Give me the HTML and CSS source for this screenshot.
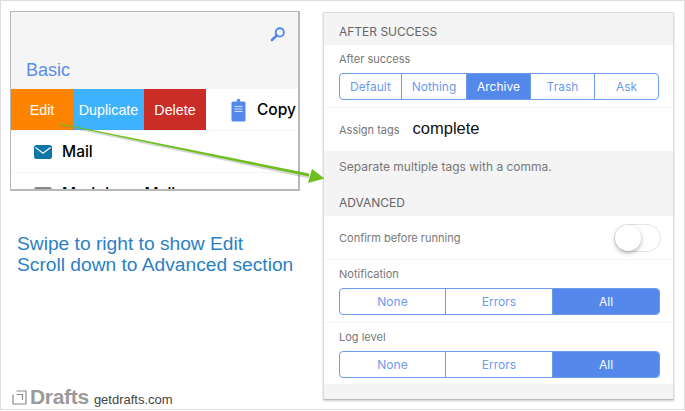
FILE: index.html
```html
<!DOCTYPE html>
<html lang="en">
<head>
  <meta charset="UTF-8">
  <title>Drafts - Edit action settings</title>
  <link rel="stylesheet" href="styles.css">
</head>
<body>
  <div class="frame">
    <div class="left">
      <div class="phone">
        <div class="phone-top">
          <div class="search-row">
            <svg class="search" width="16" height="16" viewBox="0 0 16 16"><circle cx="9.800" cy="6.400" r="4.100" fill="none" stroke="#4f86ec" stroke-width="1.900"/><path d="M6.800 9.400L2 14" stroke="#4f86ec" stroke-width="2.600" stroke-linecap="round"/></svg>
          </div>
          <div class="group-name">Basic</div>
        </div>
        <div class="swipe-row">
          <div class="swipe edit">Edit</div>
          <div class="swipe duplicate">Duplicate</div>
          <div class="swipe delete">Delete</div>
          <svg class="copy-icon" width="15" height="24" viewBox="0 0 15 24"><path d="M2 3.500h11a1.500 1.500 0 0 1 1.500 1.500v17a1.500 1.500 0 0 1-1.500 1.500H2A1.500 1.500 0 0 1 .5 22V5A1.500 1.500 0 0 1 2 3.500z" fill="#5488ea"/><circle cx="7.500" cy="2.500" r="1.800" fill="#5488ea"/><path d="M3.500 8.500h8M3.500 11h8M3.500 13.500h8" stroke="#cfe0fb" stroke-width="1"/></svg>
          <span class="action-name">Copy</span>
        </div>
        <div class="action-row">
          <svg class="mail-icon" width="18" height="14" viewBox="0 0 18 14"><rect width="18" height="14" rx="2.500" fill="#0f76a8"/><path d="M1.500 2.500L9 8.200l7.500-5.700" fill="none" stroke="#fff" stroke-width="1.100"/></svg>
          <span class="action-name">Mail</span>
        </div>
        <div class="action-row">
          <svg class="mail-icon" width="18" height="14" viewBox="0 0 18 14"><rect width="18" height="14" rx="2.500" fill="#888"/></svg>
          <span class="action-name">Markdown Mail</span>
        </div>
      </div>
      <div class="caption">Swipe to right to show Edit<br>Scroll down to Advanced section</div>
      <div class="brand">
        <svg width="15" height="15" viewBox="0 0 15 15"><path d="M1 4.500V14h13V1H4.500M4.500 4.500h6V10" fill="none" stroke="#8a8a8a" stroke-width="1.200"/></svg>
        <span class="brand-name">Drafts</span>
        <span class="brand-url">getdrafts.com</span>
      </div>
    </div>

    <div class="panel">
      <div class="section-head">AFTER SUCCESS</div>
      <div class="section">
        <div class="field">
          <div class="label">After success</div>
          <div class="segments five">
            <span class="seg s-default">Default</span>
            <span class="seg s-nothing">Nothing</span>
            <span class="seg s-archive on">Archive</span>
            <span class="seg s-trash">Trash</span>
            <span class="seg s-ask">Ask</span>
          </div>
        </div>
        <div class="tags-row">
          <span class="label">Assign tags</span>
          <span class="tags-value">complete</span>
        </div>
      </div>
      <div class="section-note">Separate multiple tags with a comma.</div>
      <div class="section-head">ADVANCED</div>
      <div class="section">
        <div class="toggle-row">
          <span class="label">Confirm before running</span>
          <span class="toggle"><span class="knob"></span></span>
        </div>
        <div class="field bordered">
          <div class="label">Notification</div>
          <div class="segments three">
            <span class="seg s-none">None</span>
            <span class="seg s-errors">Errors</span>
            <span class="seg on">All</span>
          </div>
        </div>
        <div class="field last">
          <div class="label">Log level</div>
          <div class="segments three">
            <span class="seg s-none">None</span>
            <span class="seg s-errors">Errors</span>
            <span class="seg on">All</span>
          </div>
        </div>
      </div>
    </div>

    <!-- annotation arrow from the Edit button over to the panel -->
    <svg class="arrow" width="340" height="80" viewBox="0 0 340 80">
      <path d="M60 5L309 55.500v3L60 6z" fill="#777" opacity=".3"/>
      <path d="M60 3.500L309 53.500v3L60 4.500z" fill="#6fbe1f"/>
      <path d="M312 49L324.500 58.500 308 63z" fill="#6fbe1f"/>
    </svg>
  </div>
</body>
</html>
```

FILE: styles.css
```css
* {
  box-sizing: border-box;
}
body {
  margin: 0;
  background-color: #fff;
  font-family: Inter, "Liberation Sans", sans-serif;
}
.frame {
  position: relative;
  display: flex;
  width: 685px;
  height: 410px;
  border: 1px solid #ddd;
}
.left {
  display: flex;
  flex-direction: column;
  width: 322px;
  padding: 10px 0 0 9px;
}

.phone {
  flex-shrink: 0;
  width: 290px;
  height: 180px;
  overflow: hidden;
  border: 1px solid #b8b8b8;
  border-width: 1px 2px 2px 1px;
}
.phone-top {
  height: 77px;
  background-color: #f5f5f5;
}
.search-row {
  display: flex;
  justify-content: flex-end;
  padding: 14px 12px 0 0;
}
.group-name {
  margin: 18px 0 0 15px;
  color: #5b8ee8;
  font-size: 18px;
  line-height: 21px;
  font-family: "Liberation Sans", sans-serif;
}
.swipe-row {
  display: flex;
  align-items: center;
  height: 42px;
  border-bottom: 1px solid #f4f4f4;
}
.swipe {
  display: flex;
  align-items: center;
  justify-content: center;
  height: 41px;
  color: #fff;
  font-size: 14.300px;
  font-family: "Liberation Sans", sans-serif;
}
.edit {
  width: 62px;
  background-color: #fd8400;
}
.duplicate {
  width: 71px;
  background-color: #3fb2fe;
}
.delete {
  width: 62px;
  background-color: #c92d25;
}
.copy-icon {
  margin: 0 11px 0 25px;
}
.action-row {
  display: flex;
  align-items: center;
  height: 42px;
  padding-left: 23px;
  border-bottom: 1px solid #f6f6f6;
}
.mail-icon {
  margin-right: 10px;
}
.action-name {
  color: #000;
  font-size: 15.500px;
  font-weight: 500;
  white-space: nowrap;
}

.caption {
  flex-shrink: 0;
  margin: 42px 0 0 7px;
  color: #2b80c4;
  font-size: 19.200px;
  line-height: 21px;
  white-space: nowrap;
  font-family: "Liberation Sans", sans-serif;
}
.brand {
  display: flex;
  flex-shrink: 0;
  align-items: center;
  margin: 110px 0 0 2px;
}
.brand-name {
  margin-left: 3px;
  color: #9a9a9a;
  font-size: 21px;
  font-weight: 700;
  letter-spacing: -.3px;
  font-family: "Liberation Sans", sans-serif;
}
.brand-url {
  margin: 4px 0 0 5px;
  color: #444;
  font-size: 13px;
  font-family: "Liberation Sans", sans-serif;
}

.panel {
  width: 351px;
  height: 388px;
  margin-top: 11px;
  background-color: #f4f4f4;
  border: 1px solid #dcdcdc;
  border-bottom-color: #bbb;
  box-shadow: 0 1px 2px rgba(0, 0, 0, .2);
}
.section-head {
  height: 32px;
  padding: 11px 0 0 15px;
  color: #666;
  font-size: 12px;
  line-height: 16px;
}
.section {
  background-color: #fff;
}
.section-note {
  height: 36px;
  padding: 8px 0 0 15px;
  color: #777;
  font-size: 12px;
  line-height: 16px;
}
.section-note + .section-head {
  height: 29px;
  padding-top: 8px;
}
.label {
  color: #777;
  font-size: 11px;
  line-height: 16px;
}
.field {
  padding: 6px 15px 7px;
}
.field.bordered {
  border-bottom: 1px solid #f6f6f6;
}
.field.last {
  padding-bottom: 6px;
}
.segments {
  display: flex;
  height: 27px;
  margin-top: 6px;
  overflow: hidden;
  border: 1px solid #6c9bee;
  border-radius: 4px;
}
.segments.five {
  width: 320px;
}
.segments.three {
  width: 321px;
}
.seg {
  flex: 1;
  color: #6c9bee;
  font-size: 12px;
  line-height: 25px;
  text-align: center;
  border-left: 1px solid #6c9bee;
}
.seg:first-child {
  border-left: none;
}
.seg.on {
  color: #fff;
  background-color: #5488ea;
}
.s-default {
  flex: 0 0 61px;
}
.s-nothing {
  flex: 0 0 65px;
}
.s-archive,
.s-trash {
  flex: 0 0 64px;
}
.s-none {
  flex: 0 0 105px;
}
.s-errors {
  flex: 0 0 107px;
}
.tags-row {
  display: flex;
  align-items: center;
  height: 44px;
  padding-left: 15px;
  border-top: 1px solid #f6f6f6;
}
.tags-value {
  margin: -2px 0 0 13px;
  color: #111;
  font-size: 16.500px;
  font-family: "Liberation Sans", sans-serif;
}
.toggle-row {
  display: flex;
  align-items: center;
  justify-content: space-between;
  height: 44px;
  padding: 0 12px 0 15px;
  border-bottom: 1px solid #f6f6f6;
}
.toggle {
  display: block;
  width: 47px;
  height: 28px;
  background-color: #fff;
  border: 1px solid #e4e4e4;
  border-radius: 14px;
}
.knob {
  display: block;
  width: 26px;
  height: 26px;
  background-color: #fff;
  border-radius: 50%;
  box-shadow: 0 2px 4px rgba(0, 0, 0, .3);
}
.arrow {
  position: absolute;
  top: 119px;
  left: -1px;
  pointer-events: none;
}
```
